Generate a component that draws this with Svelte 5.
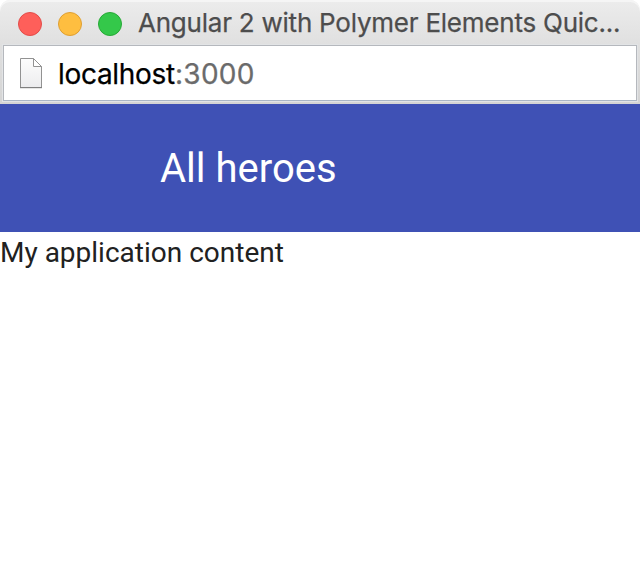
<script>
  const title = 'Angular 2 with Polymer Elements Quic...';
  const lights = ['close', 'minimize', 'zoom'];
</script>

<div class="window">
  <header class="chrome">
    <div class="titlebar">
      <div class="lights">
        {#each lights as light}
          <span class="light {light}"></span>
        {/each}
      </div>
      <span class="title">{title}</span>
    </div>
    <div class="address">
      <svg class="page-icon" width="26" height="34" viewBox="0 0 26 34" aria-hidden="true">
        <defs>
          <linearGradient id="paper" x1="0" y1="0" x2="0" y2="1">
            <stop offset="0" stop-color="#fdfdfd" />
            <stop offset="1" stop-color="#ececee" />
          </linearGradient>
        </defs>
        <path d="M2 32.5H24" stroke="#e6e6e6" />
        <path d="M2.5 2.5H15.5L23.5 10.5V31.5H2.5Z" fill="url(#paper)" stroke="#929292" />
        <path d="M15.5 2.5V10.5H23.5Z" fill="#fff" stroke="#929292" />
        <path d="M2 31.5H24" stroke="#808080" />
      </svg>
      <span class="url">localhost<span class="port">:3000</span></span>
    </div>
  </header>
  <div class="toolbar"><span>All heroes</span></div>
  <main>My application content</main>
</div>

<style>
  :global(body) {
    background: #fff;
  }
  .window {
    display: flex;
    flex-direction: column;
    height: 584px;
    overflow: hidden;
    background: #fff;
    white-space: nowrap;
  }
  .chrome {
    box-sizing: border-box;
    height: 104px;
    padding: 0 3px;
    border-radius: 10px 10px 0 0;
    background: linear-gradient(#ececec, #e0e0e0 44px, #d4d4d4);
    box-shadow: inset 0 2px #f5f5f5;
  }
  .titlebar {
    display: flex;
    align-items: center;
    box-sizing: border-box;
    height: 45px;
    padding: 3px 0 0 15px;
  }
  .lights {
    display: flex;
    gap: 16px;
    margin-right: 16px;
  }
  .light {
    box-sizing: border-box;
    width: 24px;
    height: 24px;
    border: 1px solid;
    border-radius: 50%;
  }
  .close {
    background: #fe5f5a;
    border-color: #e34c49;
  }
  .minimize {
    background: #febe40;
    border-color: #df9f32;
  }
  .zoom {
    background: #34c84a;
    border-color: #27a936;
  }
  .title {
    padding-bottom: 2px;
    font: 26px/30px Inter, sans-serif;
    letter-spacing: -0.23px;
    color: #4d4d4d;
    -webkit-text-stroke: 0.25px #4d4d4d;
  }
  .address {
    display: flex;
    align-items: center;
    box-sizing: border-box;
    height: 56px;
    padding-left: 14px;
    border: 1px solid #b5b8bd;
    border-bottom-color: #aab6c6;
    background: #fff;
    box-shadow: 0 0 0 1px #e2e4e6;
  }
  .url {
    margin-left: 14px;
    padding-top: 2px;
    font: 28px/34px Inter, sans-serif;
    letter-spacing: -0.3px;
    color: #000;
    -webkit-text-stroke: 0.25px;
  }
  .port {
    letter-spacing: 0.3px;
    color: #6b6b6b;
  }
  .toolbar {
    display: flex;
    align-items: center;
    box-sizing: border-box;
    height: 128px;
    padding: 2px 0 0 160px;
    background: #3f51b5;
    color: #fff;
    font: 40px/48px Roboto, sans-serif;
  }
  main {
    padding-top: 1px;
    color: #212121;
    font: 28px/40px Roboto, sans-serif;
  }
</style>
